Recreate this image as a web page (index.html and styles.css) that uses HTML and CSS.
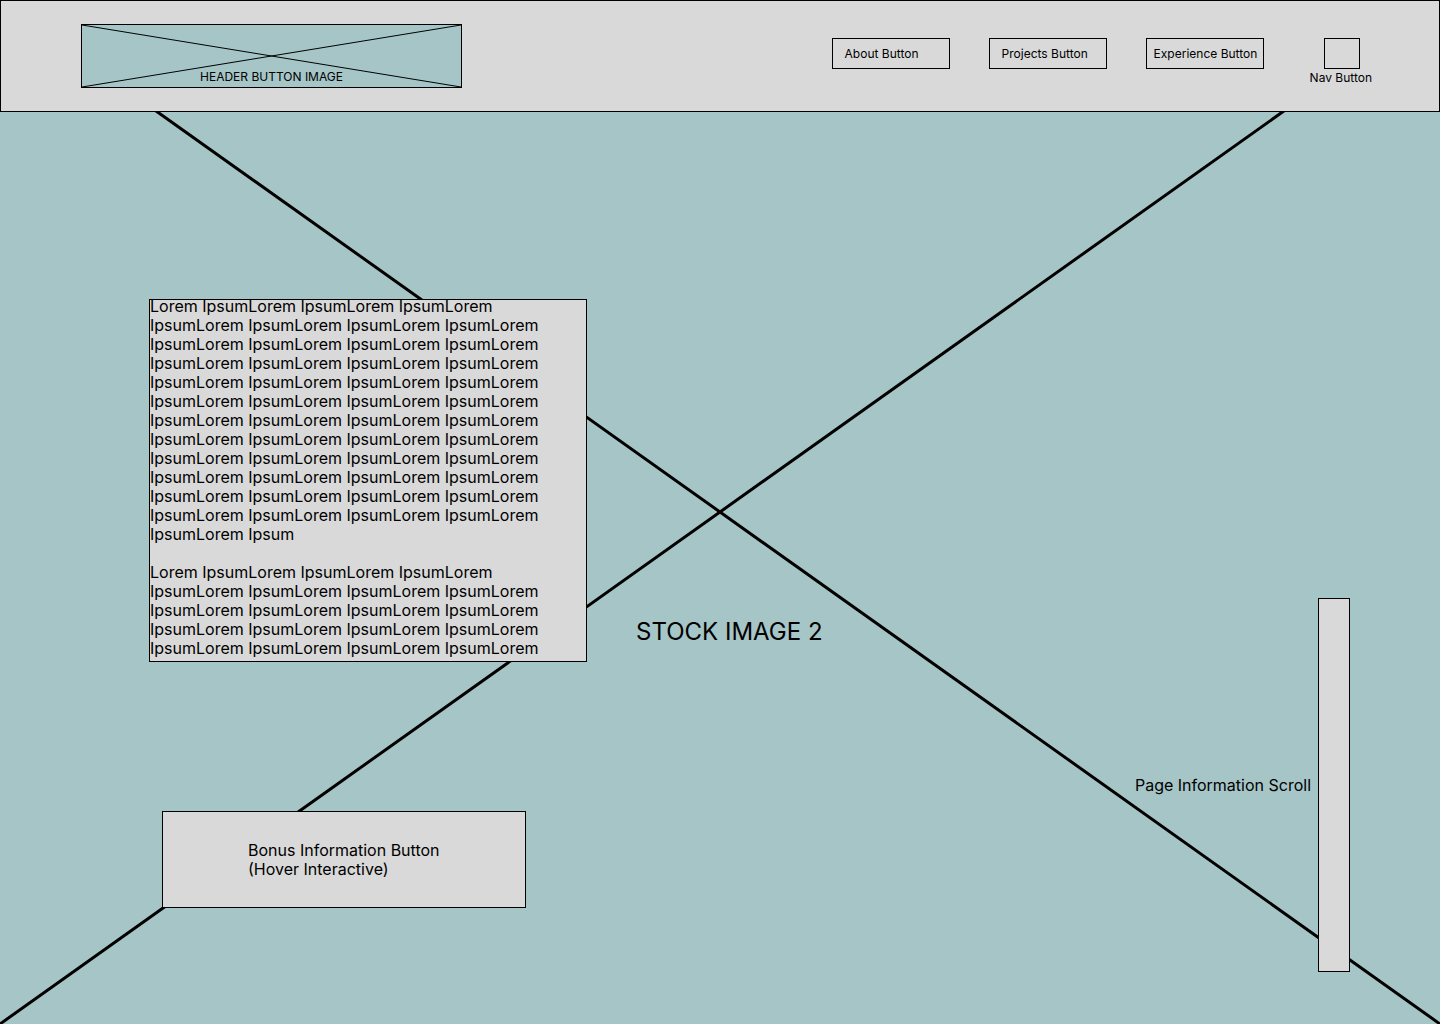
FILE: index.html
```html
<!DOCTYPE html>
<html>
<head>
    <title>Portfolio Wireframe</title>
    <link rel="stylesheet" href="styles.css">
</head>
<body>
    <div class="page">
        <!-- Stock image placeholder behind everything -->
        <svg class="backdrop" viewBox="0 0 1440 1024" preserveAspectRatio="none">
            <line x1="0" y1="0" x2="1440" y2="1024" />
            <line x1="1440" y1="0" x2="0" y2="1024" />
        </svg>

        <div class="layer">
            <!-- Header -->
            <header class="header">
                <div class="header-image">
                    <svg class="placeholder-x" viewBox="0 0 100 100" preserveAspectRatio="none">
                        <line x1="0" y1="0" x2="100" y2="100" />
                        <line x1="100" y1="0" x2="0" y2="100" />
                    </svg>
                    <span class="header-image-label">HEADER BUTTON IMAGE</span>
                </div>

                <nav class="nav">
                    <a class="nav-button">About Button</a>
                    <a class="nav-button">Projects Button</a>
                    <a class="nav-button nav-button-wide">Experience Button</a>
                    <div class="nav-toggle">
                        <div class="nav-toggle-box"></div>
                        <span class="nav-toggle-label">Nav Button</span>
                    </div>
                </nav>
            </header>

            <!-- Main content -->
            <main class="main">
                <div class="left-column">
                    <div class="text-box">
                        <p>Lorem IpsumLorem IpsumLorem IpsumLorem IpsumLorem IpsumLorem IpsumLorem IpsumLorem IpsumLorem IpsumLorem IpsumLorem IpsumLorem IpsumLorem IpsumLorem IpsumLorem IpsumLorem IpsumLorem IpsumLorem IpsumLorem IpsumLorem IpsumLorem IpsumLorem IpsumLorem IpsumLorem IpsumLorem IpsumLorem IpsumLorem IpsumLorem IpsumLorem IpsumLorem IpsumLorem IpsumLorem IpsumLorem IpsumLorem IpsumLorem IpsumLorem IpsumLorem IpsumLorem IpsumLorem IpsumLorem IpsumLorem IpsumLorem IpsumLorem IpsumLorem IpsumLorem IpsumLorem IpsumLorem IpsumLorem IpsumLorem Ipsum</p>
                        <p>Lorem IpsumLorem IpsumLorem IpsumLorem IpsumLorem IpsumLorem IpsumLorem IpsumLorem IpsumLorem IpsumLorem IpsumLorem IpsumLorem IpsumLorem IpsumLorem IpsumLorem IpsumLorem IpsumLorem IpsumLorem IpsumLorem IpsumLorem</p>
                    </div>

                    <div class="bonus-button">
                        <span>Bonus Information Button<br>(Hover Interactive)</span>
                    </div>
                </div>

                <div class="stock-label">STOCK IMAGE 2</div>

                <div class="scroll-group">
                    <span class="scroll-label">Page Information Scroll</span>
                    <div class="scroll-bar"></div>
                </div>
            </main>
        </div>
    </div>
</body>
</html>
```

FILE: styles.css
```css
/* Wireframe styles */
body {
    margin: 0;
    padding: 0;
    font-family: Inter, "Noto Sans", Arial, sans-serif;
    color: #000;
    background-color: #a6c5c7;
    overflow: hidden;
}

.page {
    display: grid;
    width: 1440px;
    height: 1024px;
}

.backdrop,
.layer {
    grid-area: 1 / 1;
}

.backdrop {
    width: 1440px;
    height: 1024px;
}

.backdrop line {
    stroke: #000;
    stroke-width: 3;
}

.layer {
    display: flex;
    flex-direction: column;
}

/* Header */
.header {
    box-sizing: border-box;
    height: 112px;
    display: flex;
    align-items: flex-start;
    padding: 23px 67px 0 80px;
    background-color: #d9d9d9;
    border: 1px solid #000;
}

.header-image {
    box-sizing: border-box;
    width: 381px;
    height: 64px;
    display: grid;
    background-color: #a6c5c7;
    border: 1px solid #000;
}

.placeholder-x,
.header-image-label {
    grid-area: 1 / 1;
}

.placeholder-x {
    width: 100%;
    height: 100%;
}

.placeholder-x line {
    stroke: #000;
    stroke-width: 1;
    vector-effect: non-scaling-stroke;
}

.header-image-label {
    align-self: end;
    justify-self: center;
    font-size: 12px;
    line-height: 14px;
    margin-bottom: 3px;
}

.nav {
    margin-left: auto;
    display: flex;
    align-items: flex-start;
    gap: 39px;
    padding-top: 14px;
}

.nav-button {
    box-sizing: border-box;
    width: 118px;
    height: 31px;
    display: flex;
    align-items: center;
    padding-left: 12px;
    border: 1px solid #000;
    font-size: 12px;
    color: #000;
    cursor: pointer;
}

.nav-button-wide {
    padding-left: 7px;
}

.nav-toggle {
    display: flex;
    flex-direction: column;
    align-items: center;
    margin-left: 7px;
}

.nav-toggle-box {
    box-sizing: border-box;
    width: 36px;
    height: 31px;
    margin-left: 2px;
    border: 1px solid #000;
}

.nav-toggle-label {
    font-size: 12px;
    line-height: 14px;
    margin-top: 2px;
}

/* Main */
.main {
    flex: 1;
    display: flex;
    align-items: flex-start;
}

.left-column {
    display: flex;
    flex-direction: column;
    align-items: flex-start;
    margin-left: 149px;
    margin-top: 187px;
}

.text-box {
    box-sizing: border-box;
    width: 438px;
    height: 363px;
    background-color: #d9d9d9;
    border: 1px solid #000;
    font-size: 16px;
    line-height: 19px;
    padding-right: 10px;
}

.text-box p {
    margin: 0 0 19px 0;
}

.text-box p:first-child {
    margin-top: -3px;
}

.bonus-button {
    box-sizing: border-box;
    width: 364px;
    height: 97px;
    display: flex;
    align-items: center;
    margin: 149px 0 0 13px;
    padding-left: 85px;
    background-color: #d9d9d9;
    border: 1px solid #000;
    font-size: 16px;
    line-height: 19px;
}

.stock-label {
    margin: 505px 0 0 49px;
    font-size: 24px;
    line-height: 29px;
}

.scroll-group {
    display: flex;
    align-items: center;
    gap: 7px;
    margin: 486px 90px 0 auto;
}

.scroll-label {
    font-size: 16px;
    line-height: 19px;
}

.scroll-bar {
    box-sizing: border-box;
    width: 32px;
    height: 374px;
    background-color: #d9d9d9;
    border: 1px solid #000;
}
```
